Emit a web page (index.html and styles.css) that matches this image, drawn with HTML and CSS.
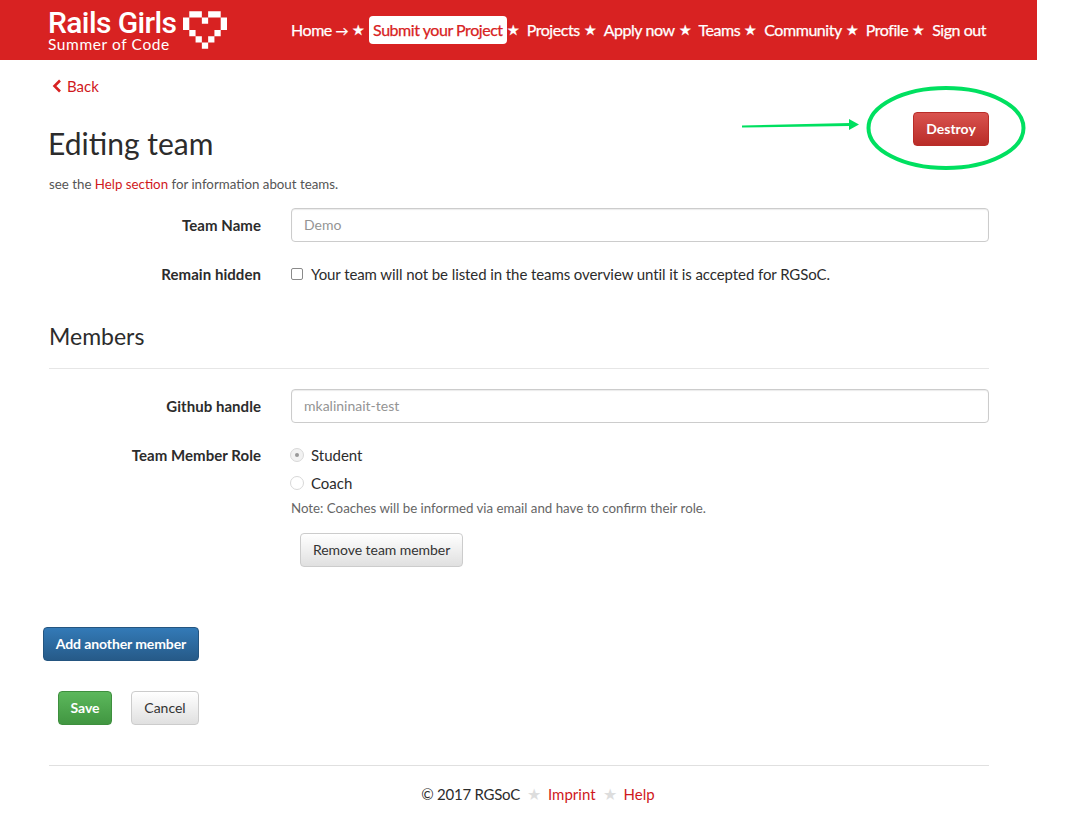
FILE: index.html
```html
<!DOCTYPE html>
<html>
<head>
    <title>Editing team</title>
    <link rel="stylesheet" href="styles.css">
</head>
<body>
    <header class="topbar">
        <a class="logo" href="#">
            <span class="logo-text">
                <span class="logo-name">Rails Girls</span>
                <span class="logo-sub">Summer of Code</span>
            </span>
            <svg class="logo-heart" width="44" height="38" viewBox="0 0 7 6" fill="#fff">
                <path d="M1 0h2v1H1zM4 0h2v1H4zM0 1h1v2H0zM3 1h1v1H3zM6 1h1v2H6zM1 3h1v1H1zM5 3h1v1H5zM2 4h1v1H2zM4 4h1v1H4zM3 5h1v1H3z"/>
            </svg>
        </a>
        <nav class="nav">
            <a href="#">Home <span class="nav-arrow">&#8594;</span></a><span class="star star-home">&#9733;</span>
            <a class="nav-active" href="#">Submit your Project</a><span class="star star-tight">&#9733;</span>
            <a href="#">Projects</a><span class="star">&#9733;</span>
            <a href="#">Apply now</a><span class="star">&#9733;</span>
            <a href="#">Teams</a><span class="star">&#9733;</span>
            <a href="#">Community</a><span class="star">&#9733;</span>
            <a href="#">Profile</a><span class="star">&#9733;</span>
            <a href="#">Sign out</a>
        </nav>
    </header>

    <main class="page">
        <div class="page-head">
            <div>
                <a class="back" href="#">
                    <svg width="10" height="14" viewBox="0 0 10 14"><path d="M8 1.5 2.500 7 8 12.500" fill="none" stroke="#d82222" stroke-width="2.600"/></svg>
                    Back
                </a>
                <h1>Editing team</h1>
            </div>
            <a class="btn btn-red" href="#">Destroy</a>
        </div>
        <p class="help-line">see the <a href="#">Help section</a> for information about teams.</p>

        <form>
            <div class="row row-input">
                <label class="row-label">Team Name</label>
                <input class="field" type="text" placeholder="Demo">
            </div>
            <div class="row row-check">
                <label class="row-label">Remain hidden</label>
                <div class="check-line">
                    <input class="check" type="checkbox">
                    <span>Your team will not be listed in the teams overview until it is accepted for RGSoC.</span>
                </div>
            </div>

            <h2>Members</h2>

            <div class="row row-input row-github">
                <label class="row-label">Github handle</label>
                <input class="field" type="text" placeholder="mkalininait-test">
            </div>
            <div class="row row-role">
                <label class="row-label">Team Member Role</label>
                <div class="role-col">
                    <div class="radio-line"><span class="radio radio-on"></span>Student</div>
                    <div class="radio-line"><span class="radio"></span>Coach</div>
                    <p class="note">Note: Coaches will be informed via email and have to confirm their role.</p>
                    <a class="btn btn-grey btn-remove" href="#">Remove team member</a>
                </div>
            </div>

            <a class="btn btn-blue btn-add" href="#">Add another member</a>
            <div class="actions">
                <a class="btn btn-green" href="#">Save</a>
                <a class="btn btn-grey" href="#">Cancel</a>
            </div>
        </form>

        <footer class="footer">
            <span class="copyright">&copy; 2017 RGSoC</span><span class="foot-star">&#9733;</span><a href="#">Imprint</a><span class="foot-star">&#9733;</span><a href="#">Help</a>
        </footer>
    </main>

    <!-- green marks drawn on top of the screenshot -->
    <svg class="marks" width="1075" height="825" viewBox="0 0 1075 825">
        <ellipse cx="946" cy="128" rx="77.500" ry="40" fill="none" stroke="#00e060" stroke-width="4"/>
        <path d="M742 125.500 850 123 850 126 742 127.500z" fill="#00e060"/>
        <path d="M849 119 859 124.500 849 130z" fill="#00e060"/>
    </svg>
</body>
</html>
```

FILE: styles.css
```css
body {
    margin: 0;
    padding: 0;
    background-color: #fff;
    color: #2c2c2c;
    font-family: Lato, "Liberation Sans", sans-serif;
    font-size: 15px;
    line-height: 20px;
}
a {
    color: #d0181c;
    text-decoration: none;
}
.topbar {
    width: 1037px;
    height: 60px;
    background-color: #d82222;
    display: flex;
    align-items: center;
    box-sizing: border-box;
    padding-left: 48px;
}
.logo {
    display: flex;
    align-items: center;
    color: #fff;
    gap: 7px;
    width: 243px;
}
.logo-text {
    display: flex;
    flex-direction: column;
    margin-top: 2px;
}
.logo-name {
    font-family: Roboto, sans-serif;
    font-size: 30px;
    font-weight: 500;
    line-height: 26px;
    letter-spacing: -0.6px;
}
.logo-sub {
    font-size: 15.500px;
    line-height: 16px;
    letter-spacing: 0.6px;
}
.logo-heart {
    margin-top: -1px;
}
.nav {
    display: flex;
    align-items: center;
    font-size: 16px;
    letter-spacing: -0.45px;
    -webkit-text-stroke: 0.25px;
}
.nav a {
    color: #fff;
}
.nav-arrow {
    font-size: 13px;
}
.nav .nav-active {
    background-color: #fff;
    color: #d82222;
    border-radius: 4px;
    padding: 4px 4px;
    line-height: 20px;
}
.star {
    color: #fff;
    font-size: 14px;
    letter-spacing: 0;
    margin: 0 7px 0 4px;
}
.star-home {
    margin-right: 4px;
}
.star-tight {
    margin-left: 0;
}
.page {
    width: 940px;
    margin-left: 49px;
}
.page-head {
    display: flex;
    justify-content: space-between;
    align-items: flex-start;
}
.back {
    display: flex;
    align-items: center;
    gap: 5px;
    margin: 16px 0 0 3px;
}
h1 {
    font-size: 30px;
    font-weight: 400;
    line-height: 36px;
    margin: 29px 0 0 -1px;
}
.help-line {
    margin: 13px 0 0;
    font-size: 13.300px;
    color: #555;
}
.row {
    display: flex;
}
.row-label {
    width: 212px;
    margin-right: 30px;
    text-align: right;
    font-weight: 700;
    letter-spacing: 0.05px;
    flex-shrink: 0;
}
.row-input {
    align-items: center;
    margin-top: 14px;
}
.field {
    flex: 1;
    height: 34px;
    box-sizing: border-box;
    padding: 0 12px 2px;
    border: 1px solid #ccc;
    border-radius: 4px;
    font-family: inherit;
    font-size: 14px;
    box-shadow: inset 0 1px 1px rgba(0, 0, 0, 0.08);
}
.field::placeholder {
    color: #949494;
}
.row-check {
    margin-top: 22px;
}
.check-line {
    display: flex;
    align-items: center;
    letter-spacing: -0.085px;
}
.check {
    appearance: none;
    box-sizing: border-box;
    width: 12px;
    height: 12px;
    margin: 0 8px 0 0;
    border: 1px solid #8a8a8a;
    border-radius: 2px;
    background-color: #fff;
}
h2 {
    font-size: 23px;
    font-weight: 400;
    line-height: 28px;
    margin: 38px 0 0;
    padding-bottom: 18px;
    border-bottom: 1px solid #e6e6e6;
}
.row-github {
    margin-top: 20px;
}
.row-role {
    margin-top: 22px;
}
.role-col {
    flex: 1;
    margin-left: -1px;
}
.radio-line {
    display: flex;
    align-items: center;
    height: 20px;
    margin-bottom: 8px;
}
.radio {
    width: 12px;
    height: 12px;
    border: 1px solid #d8d8d8;
    border-radius: 50%;
    margin-right: 7px;
    background-color: #fff;
    position: relative;
}
.radio-on {
    background-color: #f2f2f2;
}
.radio-on::after {
    content: "";
    position: absolute;
    left: 4px;
    top: 4px;
    width: 4px;
    height: 4px;
    border-radius: 50%;
    background-color: #999;
}
.note {
    margin: -3px 0 0 1px;
    font-size: 13.300px;
    color: #666;
}
.btn {
    display: inline-block;
    box-sizing: border-box;
    height: 34px;
    line-height: 32px;
    padding: 0 12px;
    border: 1px solid;
    border-radius: 4px;
    font-size: 14px;
    text-align: center;
}
.btn-red {
    margin-top: 52px;
    width: 76px;
    padding: 0;
    color: #fff;
    font-weight: 700;
    background-image: linear-gradient(#d9534f, #b92c28);
    border-color: #b92c28;
}
.btn-grey {
    color: #333;
    background-image: linear-gradient(#fff, #e0e0e0);
    border-color: #ccc;
}
.btn-blue {
    color: #fff;
    font-weight: 700;
    background-image: linear-gradient(#337ab7, #265a88);
    border-color: #245580;
}
.btn-green {
    color: #fff;
    font-weight: 700;
    background-image: linear-gradient(#5cb85c, #419641);
    border-color: #3e8f3e;
}
.btn-remove {
    margin: 15px 0 0 10px;
    letter-spacing: -0.05px;
}
.btn-add {
    display: block;
    width: 156px;
    padding: 0;
    margin: 60px 0 0 -6px;
    letter-spacing: -0.1px;
}
.actions {
    display: flex;
    gap: 19px;
    margin: 30px 0 0 9px;
}
.actions .btn-green {
    width: 54px;
    padding: 0;
}
.actions .btn-grey {
    width: 68px;
    padding: 0;
}
.footer {
    margin-top: 40px;
    padding-top: 18px;
    padding-left: 38px;
    border-top: 1px solid #e0e0e0;
    display: flex;
    justify-content: center;
    align-items: center;
    font-size: 15px;
}
.copyright {
    letter-spacing: -0.25px;
}
.foot-star {
    color: #ddd;
    margin: 0 7px;
    font-size: 16px;
}
.marks {
    position: absolute;
    left: 0;
    top: 0;
    pointer-events: none;
}
```
